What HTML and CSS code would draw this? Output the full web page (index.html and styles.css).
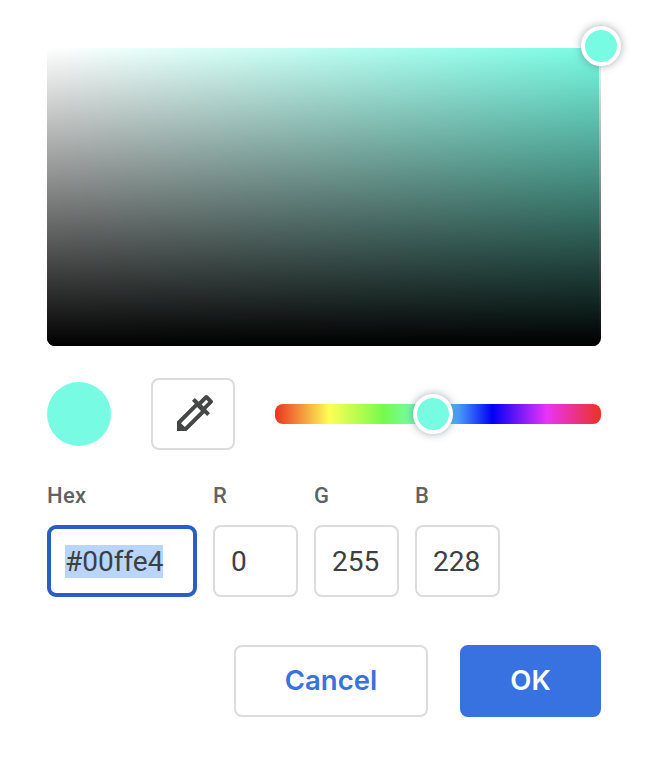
FILE: index.html
```html
<!DOCTYPE html>
<html lang="en">
<head>
<meta charset="utf-8">
<title>Color picker</title>
<link rel="stylesheet" href="styles.css">
</head>
<body>
<main class="picker">
  <div class="shade">
    <div class="shade-color"></div>
    <span class="handle shade-handle"></span>
  </div>
  <div class="tools">
    <span class="preview"></span>
    <button class="dropper" type="button" aria-label="Pick color">
      <svg viewBox="0 0 24 24" width="48" height="48"><path fill="#444746" fill-rule="evenodd" d="M20.71 5.63l-2.34-2.34c-.39-.39-1.02-.39-1.41 0l-3.12 3.12-1.93-1.91-1.41 1.41 1.42 1.42L3 16.25V21h4.75l8.92-8.92 1.42 1.42 1.41-1.41-1.92-1.92 3.12-3.12c.4-.4.4-1.03.01-1.42zM6.92 19L5 17.08l8.06-8.06 1.92 1.92L6.92 19zM16.3 8.7L15.3 7.7 17.65 5.35 18.65 6.35z"/></svg>
    </button>
    <div class="hue"><span class="handle hue-handle"></span></div>
  </div>
  <div class="fields">
    <div class="field hex"><span class="label">Hex</span><div class="input focused"><span class="selected">#00ffe4</span></div></div>
    <div class="field"><span class="label">R</span><div class="input">0</div></div>
    <div class="field"><span class="label">G</span><div class="input">255</div></div>
    <div class="field"><span class="label">B</span><div class="input">228</div></div>
  </div>
  <div class="actions">
    <button class="button cancel" type="button">Cancel</button>
    <button class="button ok" type="button">OK</button>
  </div>
</main>
</body>
</html>
```
FILE: styles.css
```css
* { box-sizing: border-box; }
body { margin: 0; background: #fff; font-family: Roboto, sans-serif; }
.picker { width: 646px; height: 760px; padding: 48px 45px 0 47px; background: #fff; }
.shade {
  position: relative;
  height: 298px;
  padding-right: 2px;
  border-radius: 8px;
  background: linear-gradient(to bottom, #fff, #000);
}
.shade-color {
  height: 100%;
  border-radius: 8px 0 6px 8px;
  background: linear-gradient(to top, #000, transparent), linear-gradient(to right, #fff, #77fbe3);
}
.handle {
  position: absolute;
  width: 40px;
  height: 40px;
  border: 4px solid #fff;
  border-radius: 50%;
  background: #77fce3;
  box-shadow: 0 0 8px rgba(60, 64, 80, .45);
}
.shade-handle { right: -20px; top: -22px; }
.tools { display: flex; align-items: center; height: 72px; margin-top: 32px; }
.preview { width: 64px; height: 64px; border-radius: 50%; background: #77fce3; }
.dropper {
  display: flex;
  align-items: center;
  justify-content: center;
  width: 84px;
  height: 72px;
  margin: 0 40px;
  padding: 0 0 2px 4px;
  border: 2px solid #dadce0;
  border-radius: 8px;
  background: #fff;
}
.hue {
  position: relative;
  flex: 1;
  height: 20px;
  border-radius: 8px;
  background: linear-gradient(to right, #ea3323, #ffff54 16.67%, #75fb4c 33.33%, #75fbfd 50%, #0000f5 66.67%, #ea33f7 83.33%, #ea3323);
}
.hue-handle { left: 138px; top: -10px; }
.fields { display: flex; gap: 16px; margin-top: 33px; }
.field { width: 85px; }
.hex { width: 150px; }
.label { display: block; height: 42px; line-height: 26px; font-size: 22px; font-weight: 500; letter-spacing: .3px; color: #5f6368; }
.input {
  display: flex;
  align-items: center;
  height: 72px;
  padding-left: 16px;
  border: 2px solid #dadce0;
  border-radius: 8px;
  font-size: 28px;
  line-height: 33px;
  color: #3c4043;
}
.focused { padding-left: 14px; border: 4px solid #285ec8; border-radius: 9px; }
.selected { background: #b9d5fb; }
.actions { display: flex; justify-content: flex-end; gap: 32px; margin-top: 48px; }
.button {
  height: 72px;
  padding: 0 0 2px;
  border: 2px solid #dadce0;
  border-radius: 8px;
  background: #fff;
  color: #3872e0;
  font: 600 27.5px Inter, sans-serif;
}
.cancel { width: 194px; }
.ok { width: 141px; border-color: #3872e0; background: #3872e0; color: #fff; }
```
